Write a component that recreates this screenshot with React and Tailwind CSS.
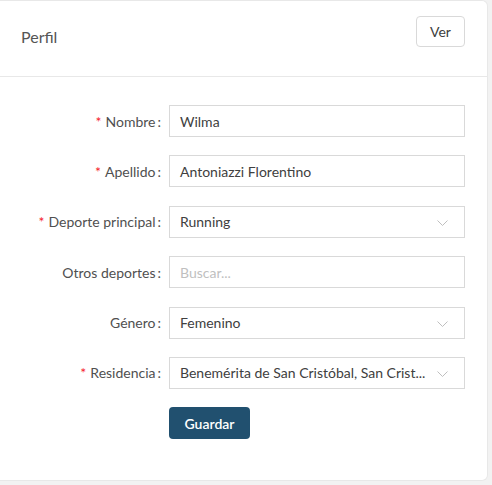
import React from "react";

const Chevron = () => (
  <svg width="11" height="7" viewBox="0 0 11 7" className="absolute right-[16px] top-[13px]">
    <path d="M0.5 0.5 L5.5 5.5 L10.5 0.5" fill="none" stroke="#bfbfbf" strokeWidth="1" />
  </svg>
);

const Row = ({ label, required, value, placeholder, select }) => (
  <div className="flex items-center h-[32px]">
    <div className="w-[162px] text-right text-[14px] text-[#505050] pr-[1px]">
      {required && <span className="text-[#f5222d] mr-[4px]">*</span>}
      {label}
      <span className="ml-[2px]">:</span>
    </div>
    <div className="relative ml-[7px] w-[296px] h-[32px] border border-[#d9d9d9] bg-white flex items-center pl-[10px] text-[14px]">
      {value ? (
        <span className="text-[#404040] whitespace-nowrap">{value}</span>
      ) : (
        <span className="text-[#bfbfbf]">{placeholder}</span>
      )}
      {select && <Chevron />}
    </div>
  </div>
);

export default function App() {
  return (
    <div className="w-[492px] h-[485px] bg-[#f2f2f2]" style={{ fontFamily: "Lato, 'Open Sans', sans-serif" }}>
      <div className="w-[488px] h-[481px] bg-white border-t border-r border-b border-[#e8e8e8] rounded-tr-[6px] rounded-br-[6px]">
        <div className="h-[76px] border-b border-[#e8e8e8] flex items-center justify-between pl-[21px] pr-[22px]">
          <span className="text-[16px] text-[#555] mb-[3px]">Perfil</span>
          <button className="w-[49px] h-[31px] border border-[#d9d9d9] rounded-[4px] text-[14px] text-[#404040] bg-white mb-[14px]">
            Ver
          </button>
        </div>
        <div className="pt-[28px] flex flex-col gap-y-[18.4px]">
          <Row label="Nombre" required value="Wilma" />
          <Row label="Apellido" required value="Antoniazzi Florentino" />
          <Row label="Deporte principal" required value="Running" select />
          <Row label="Otros deportes" placeholder="Buscar..." />
          <Row label="Género" value="Femenino" select />
          <Row label="Residencia" required value="Benemérita de San Cristóbal, San Crist..." select />
          <div className="pl-[169px]">
            <button className="w-[81px] h-[32px] rounded-[4px] bg-[#21506f] text-white text-[14px] font-semibold">
              Guardar
            </button>
          </div>
        </div>
      </div>
    </div>
  );
}
